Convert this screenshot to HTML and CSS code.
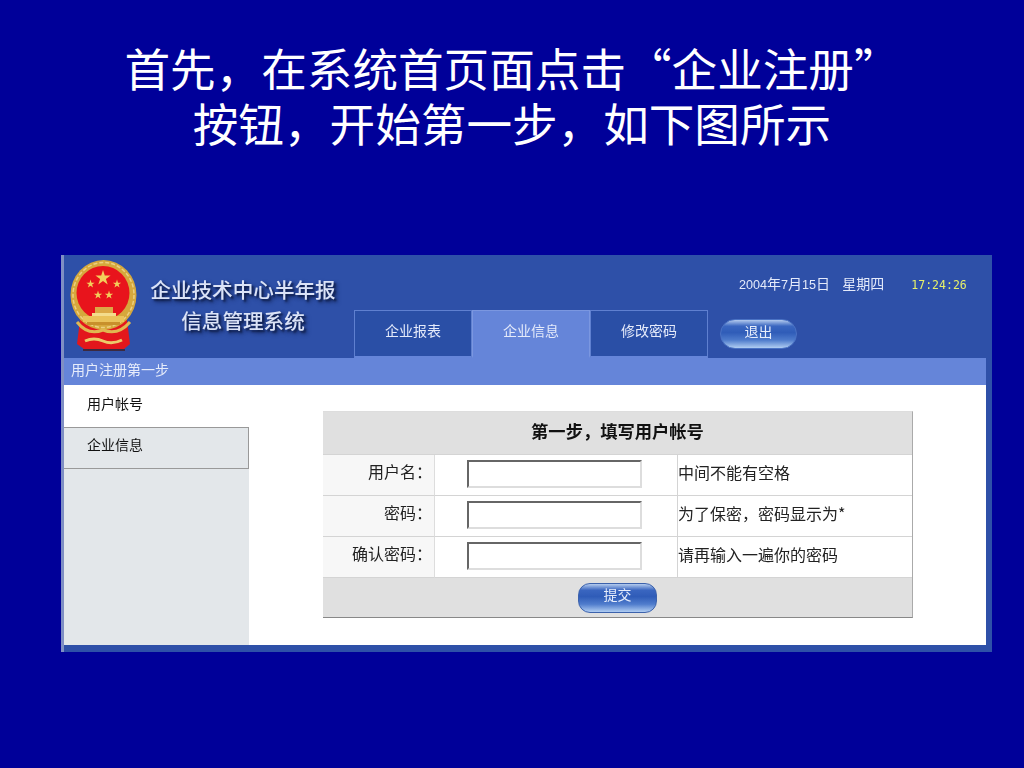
FILE: index.html
```html
<!DOCTYPE html>
<html lang="zh-CN">
<head>
  <meta charset="UTF-8">
  <title>企业注册</title>
  <link rel="stylesheet" href="styles.css">
</head>
<body>
  <h1 class="slide-title">首先，在系统首页面点击“企业注册”<br>按钮，开始第一步，如下图所示</h1>

  <div class="shot">
    <div class="top">
      <svg class="emblem" viewBox="0 0 67 92" width="67" height="92">
        <defs>
          <polygon id="star" points="0,-1 .225,-.309 .951,-.309 .363,.118 .588,.809 0,.382 -.588,.809 -.363,.118 -.951,-.309 -.225,-.309"/>
        </defs>
        <path d="M10 60 L7 84 L14 89 L54 89 L60 84 L57 60 Z" fill="#e3171c"/>
        <path d="M13 90 L55 90" fill="none" stroke="#3c2a40" stroke-width="2"/>
        <ellipse cx="33.5" cy="35" rx="33" ry="35" fill="#d6a83c"/>
        <ellipse cx="33.5" cy="35" rx="30.5" ry="32.5" fill="none" stroke="#ecd080" stroke-width="1.5" stroke-dasharray="4 2"/>
        <ellipse cx="33" cy="33" rx="26.5" ry="27" fill="#e8141c"/>
        <g fill="#f3cf5a">
          <use href="#star" transform="translate(33 18) scale(8)"/>
          <use href="#star" transform="translate(20.5 24) scale(4.4)"/>
          <use href="#star" transform="translate(47 24) scale(4.4)"/>
          <use href="#star" transform="translate(28 35) scale(4.4)"/>
          <use href="#star" transform="translate(39 35) scale(4.4)"/>
          <rect x="25" y="47" width="18" height="8" fill="#dca946"/>
          <rect x="22" y="53" width="24" height="3" fill="#f4dc8c"/>
          <rect x="13" y="56" width="41" height="6" fill="#eac25a"/>
          <rect x="17" y="62" width="33" height="3" fill="#c8902c"/>
        </g>
        <path d="M7 62 Q18 76 33 70 Q48 76 60 62" fill="none" stroke="#e0b850" stroke-width="3"/>
        <path d="M15 81 Q24 77 33 81 Q42 85 52 80" fill="none" stroke="#eccb6a" stroke-width="3"/>
      </svg>
      <div class="sys-name">
        <div>企业技术中心半年报</div>
        <div>信息管理系统</div>
      </div>
      <div class="top-right">
        <div class="status">
          <span class="date"><span class="num">2004</span>年<span class="num">7</span>月<span class="num">15</span>日</span>
          <span class="week">星期四</span>
          <span class="clock">17:24:26</span>
        </div>
        <div class="tabs">
          <div class="tab">企业报表</div>
          <div class="tab active">企业信息</div>
          <div class="tab">修改密码</div>
          <button class="pill exit">退出</button>
        </div>
      </div>
    </div>

    <div class="step-bar">用户注册第一步</div>

    <div class="main">
      <div class="side">
        <div class="side-item current">用户帐号</div>
        <div class="side-item">企业信息</div>
      </div>
      <div class="content">
        <table class="form-table">
          <colgroup>
            <col class="col-label">
            <col class="col-field">
            <col>
          </colgroup>
          <tr>
            <th colspan="3" class="form-head">第一步，填写用户帐号</th>
          </tr>
          <tr>
            <td class="label">用户名：</td>
            <td class="field"><input type="text" class="text-input"></td>
            <td class="hint">中间不能有空格</td>
          </tr>
          <tr>
            <td class="label">密码：</td>
            <td class="field"><input type="text" class="text-input"></td>
            <td class="hint">为了保密，密码显示为*</td>
          </tr>
          <tr>
            <td class="label">确认密码：</td>
            <td class="field"><input type="text" class="text-input"></td>
            <td class="hint">请再输入一遍你的密码</td>
          </tr>
          <tr>
            <td colspan="3" class="form-foot"><button class="pill submit">提交</button></td>
          </tr>
        </table>
      </div>
    </div>
  </div>
</body>
</html>
```

FILE: styles.css
```css
body {
  margin: 0;
  background: #000099;
  font-family: "Liberation Sans", "Noto Sans CJK SC", sans-serif;
}

.slide-title {
  margin: 0;
  padding: 40px 0 105px;
  color: #fff;
  font-size: 45.6px;
  font-weight: 400;
  line-height: 55px;
  text-align: center;
  font-family: "Noto Sans CJK SC", sans-serif;
}

.shot {
  width: 928px;
  margin-left: 61px;
  border-left: 3px solid #7f8fc4;
  background: #2e50a8;
  padding-bottom: 7px;
  font-family: "Noto Sans CJK SC", sans-serif;
  filter: blur(0.35px);
}

.top {
  display: flex;
  height: 103px;
}

.emblem {
  margin: 5px 0 0 6px;
  flex: none;
}

.sys-name {
  width: 186px;
  margin: 19px 18px 0 13px;
  flex: none;
  color: #dbe3f7;
  font-size: 20.6px;
  font-weight: 500;
  line-height: 31px;
  text-align: center;
  white-space: nowrap;
  text-shadow: 2px 2px 2px #10204e, 3px 3px 4px #14265c;
}

.top-right {
  flex: 1;
  display: flex;
  flex-direction: column;
}

.status {
  height: 55px;
  padding: 18px 0 0 385px;
  box-sizing: border-box;
  color: #e4eafa;
  font-size: 14px;
  line-height: 20px;
  white-space: nowrap;
}

.num {
  font-family: "Liberation Sans", sans-serif;
  font-size: 12.6px;
}

.week {
  margin-left: 9px;
}

.clock {
  margin-left: 24px;
  color: #e6f06a;
  font-family: "DejaVu Sans Mono", monospace;
  font-size: 11.5px;
}

.tabs {
  display: flex;
  height: 48px;
}

.tab {
  width: 118px;
  box-sizing: border-box;
  border: 1px solid #5f80d0;
  border-bottom: 2px solid #6585d9;
  background: #2a4fa6;
  color: #e4eafa;
  font-size: 14px;
  line-height: 39px;
  text-align: center;
}

.tab.active {
  background: #6585d9;
  border-color: #7b97e0;
  border-bottom-color: #6585d9;
}

.pill {
  padding: 0 0 6px;
  color: #e6edfb;
  font-family: inherit;
  font-size: 14px;
  line-height: 20px;
  border: 1px solid #4a72c4;
  background: linear-gradient(#b4cbee 0, #3a66c0 22%, #2f5cb8 45%, #4f7ccc 72%, #b0cdf2 100%);
}

.exit {
  width: 77px;
  height: 30px;
  margin: 9px 0 0 12px;
  border-radius: 15px;
}

.step-bar {
  height: 27px;
  margin-right: 6px;
  padding-left: 7px;
  background: #6585d9;
  color: #e6ecfb;
  font-size: 14px;
  line-height: 22px;
}

.main {
  display: flex;
  height: 260px;
  margin-right: 6px;
  background: #fff;
}

.side {
  width: 185px;
  flex: none;
  background: #e3e7ea;
}

.side-item {
  height: 42px;
  box-sizing: border-box;
  padding-left: 23px;
  color: #111;
  font-size: 14px;
  line-height: 32px;
  border-top: 1px solid #999;
  border-bottom: 1px solid #999;
  border-right: 1px solid #999;
}

.side-item.current {
  background: #fff;
  border: 0;
  line-height: 36px;
}

.content {
  flex: 1;
  padding: 26px 0 0 74px;
}

.form-table {
  width: 590px;
  table-layout: fixed;
  border-spacing: 0;
  border-top: 1px solid #ddd;
  border-right: 1px solid #aaa;
  border-bottom: 1px solid #888;
  color: #222;
  font-size: 16px;
}

.col-label {
  width: 112px;
}

.col-field {
  width: 243px;
}

.form-table td,
.form-table th {
  height: 41px;
  box-sizing: border-box;
  padding: 0;
  border-bottom: 1px solid #d4d4d4;
  line-height: 20px;
}

.form-table .form-head {
  height: 43px;
  background: #e0e0e0;
  color: #111;
  font-size: 17.3px;
  font-weight: 700;
  padding-bottom: 5px;
}

.form-table .label {
  padding: 0 2px 9px 0;
  background: #f7f7f7;
  border-right: 1px solid #ddd;
  text-align: right;
}

.form-table .field {
  padding: 0 0 2px 32px;
  border-right: 1px solid #d4d4d4;
}

.form-table .hint {
  padding: 0 0 7px 0;
  background: #fff;
}

.text-input {
  display: block;
  width: 175px;
  height: 28px;
  box-sizing: border-box;
  border: 2px solid;
  border-color: #666 #ddd #ddd #666;
  background: #fff;
  padding: 0;
}

.form-table .form-foot {
  height: 39px;
  background: #e0e0e0;
  border-bottom: 0;
  padding: 0 0 0 255px;
}

.submit {
  display: block;
  width: 79px;
  height: 30px;
  border-color: #3c62ac;
  border-radius: 12px;
  padding-bottom: 8px;
}
```
